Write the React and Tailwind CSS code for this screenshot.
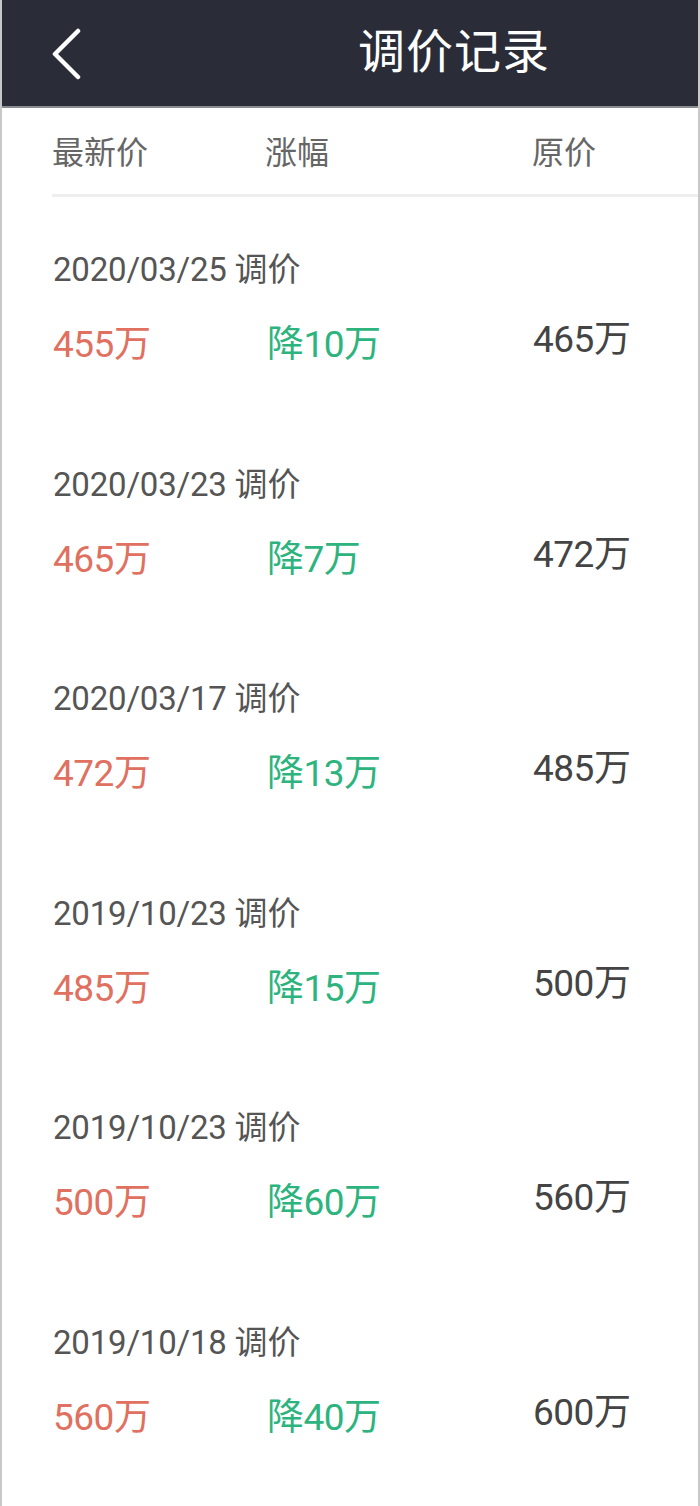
import React from "react";

const records = [
  { date: "2020/03/25", now: "455万", diff: "降10万", orig: "465万" },
  { date: "2020/03/23", now: "465万", diff: "降7万", orig: "472万" },
  { date: "2020/03/17", now: "472万", diff: "降13万", orig: "485万" },
  { date: "2019/10/23", now: "485万", diff: "降15万", orig: "500万" },
  { date: "2019/10/23", now: "500万", diff: "降60万", orig: "560万" },
  { date: "2019/10/18", now: "560万", diff: "降40万", orig: "600万" },
];

const font = { fontFamily: 'Roboto, "Noto Sans CJK SC", sans-serif' };

export default function App() {
  return (
    <div
      className="w-[700px] h-[1506px] bg-white border-x-2 border-[#c8c8c8] overflow-hidden"
      style={font}
    >
      <div className="h-[108px] bg-[#2a2c38] border-b-2 border-[#8a8c94] flex items-center">
        <svg
          className="ml-[46px] mt-[2px]"
          width="34"
          height="52"
          viewBox="0 0 34 52"
          fill="none"
          stroke="white"
          strokeWidth="4.5"
          strokeLinecap="round"
          strokeLinejoin="round"
        >
          <path d="M30 3 L7 26 L30 49" />
        </svg>
        <div className="ml-[276px] text-white text-[47px] tracking-[1px] mb-[2px]">
          调价记录
        </div>
      </div>

      <div className="pl-[50px]">
        <div className="h-[86px] flex items-center text-[32px] text-[#666] pt-[4px]">
          <span className="w-[213px]">最新价</span>
          <span className="w-[267px]">涨幅</span>
          <span>原价</span>
        </div>
        <div className="h-[3px] bg-[#eeeeee]" />
      </div>

      <div className="pl-[51px] pt-[53px]">
        {records.map((r, i) => (
          <div key={i} className="h-[214.5px]">
            <div className="text-[33px] tracking-[-0.2px] text-[#555] leading-[40px]">
              {r.date} 调价
            </div>
            <div className="flex items-center mt-[24px] text-[37px] tracking-[-0.5px] leading-[52px]">
              <span className="w-[214px] text-[#e0705f]">{r.now}</span>
              <span className="w-[266px] text-[#2db47e]">{r.diff}</span>
              <span className="text-[#444] mb-[10px]">{r.orig}</span>
            </div>
          </div>
        ))}
      </div>
    </div>
  );
}
